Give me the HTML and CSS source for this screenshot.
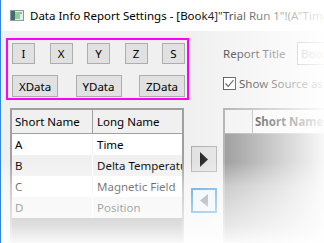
FILE: index.html
```html
<!DOCTYPE html>
<html>
<head>
<meta charset="utf-8">
<link rel="stylesheet" href="styles.css">
</head>
<body>
<div class="window">
  <div class="titlebar">
    <svg class="appicon" width="14" height="11" viewBox="0 0 14 11">
      <rect x="0.5" y="0.5" width="13" height="10" fill="#e6eded" stroke="#8c9a9a"/>
      <rect x="1" y="1" width="4" height="9" fill="#436b70"/>
      <rect x="5" y="2" width="5" height="7" fill="#8fcf95"/>
      <rect x="10" y="2" width="2" height="2" fill="#9bb0b0"/>
    </svg>
    <span class="title">Data Info Report Settings - [Book4]"Trial Run 1"!(A"Time")</span>
  </div>
  <div class="client">
    <div class="toprow">
      <div class="tokens">
        <div class="btnrow r1">
          <div class="btn">I</div>
          <div class="btn">X</div>
          <div class="btn">Y</div>
          <div class="btn">Z</div>
          <div class="btn">S</div>
        </div>
        <div class="btnrow r2">
          <div class="btn">XData</div>
          <div class="btn">YData</div>
          <div class="btn">ZData</div>
        </div>
      </div>
      <div class="form">
        <div class="field">
          <span class="label">Report Title</span>
          <div class="textbox">Book4</div>
        </div>
        <div class="check">
          <span class="box">
            <svg width="11" height="11" viewBox="0 0 11 11"><path d="M1.5 5.5 L4.2 8.3 L9.5 2.2" fill="none" stroke="#333" stroke-width="1.2"/></svg>
          </span>
          <span>Show Source as Title</span>
        </div>
      </div>
    </div>
    <div class="bottomrow">
      <div class="grid left">
        <div class="ghead">
          <div class="c1">Short Name</div>
          <div class="c2">Long Name</div>
        </div>
        <div class="grow">
          <div class="c1">A</div>
          <div class="c2">Time</div>
        </div>
        <div class="grow alt">
          <div class="c1">B</div>
          <div class="c2">Delta Temperature</div>
        </div>
        <div class="grow">
          <div class="c1">C</div>
          <div class="c2">Magnetic Field</div>
        </div>
        <div class="grow alt">
          <div class="c1">D</div>
          <div class="c2">Position</div>
        </div>
      </div>
      <div class="movers">
        <div class="mv">
          <svg width="8" height="15" viewBox="0 0 8 15"><polygon points="0,0 8,7.5 0,15" fill="#1a1a1a"/></svg>
        </div>
        <div class="mv focus">
          <svg width="8" height="13" viewBox="0 0 8 13"><polygon points="8,0 0,6.5 8,13" fill="#6e6e6e"/></svg>
        </div>
      </div>
      <div class="grid right">
        <div class="ghead">
          <div class="r0"></div>
          <div class="rh">Short Name</div>
        </div>
      </div>
    </div>
  </div>
  <div class="fade"></div>
</div>
</body>
</html>
```
FILE: styles.css
```css
* {
  box-sizing: border-box;
  margin: 0;
  padding: 0;
}

html, body {
  width: 324px;
  height: 243px;
  overflow: hidden;
  background: #fff;
}

body {
  font-family: "Noto Sans", "Open Sans", sans-serif;
  font-size: 11.5px;
  color: #000;
}

.window {
  position: relative;
  width: 324px;
  height: 243px;
  border-left: 1px solid #2f86dc;
  background: #f0f0f0;
  display: flex;
  flex-direction: column;
  overflow: hidden;
}

.titlebar {
  height: 31px;
  flex: none;
  background: #fff;
  display: flex;
  align-items: center;
  padding-left: 9px;
  gap: 6px;
  white-space: nowrap;
}

.appicon {
  flex: none;
}

.title {
  font-size: 11.5px;
  color: #000;
}

.client {
  flex: 1;
  padding-top: 7px;
  display: flex;
  flex-direction: column;
  gap: 8px;
  min-height: 0;
}

.toprow {
  display: flex;
  gap: 34px;
  padding-left: 5px;
  height: 62px;
  flex: none;
}

.tokens {
  width: 183px;
  height: 62px;
  flex: none;
  border: 2px solid #ff00ff;
  padding: 3px 2px 1px 4px;
  display: flex;
  flex-direction: column;
  justify-content: space-between;
}

.btnrow {
  display: flex;
  justify-content: space-between;
}

.btn {
  background: #e1e1e1;
  border: 1px solid #adadad;
  display: flex;
  align-items: center;
  justify-content: center;
  color: #000;
}

.r1 .btn {
  width: 23px;
  height: 21px;
}

.r2 .btn {
  width: 46px;
  height: 22px;
}

.form {
  display: flex;
  flex-direction: column;
  padding-top: 4px;
  gap: 12px;
  white-space: nowrap;
}

.field {
  display: flex;
  align-items: center;
}

.label {
  width: 74px;
  color: #222;
}

.textbox {
  width: 80px;
  height: 23px;
  border: 1px solid #7a7a7a;
  background: #fff;
  padding-left: 3px;
  display: flex;
  align-items: center;
  color: #6d6d6d;
}

.check {
  display: flex;
  align-items: center;
  gap: 3px;
  height: 13px;
}

.box {
  width: 13px;
  height: 13px;
  border: 1px solid #333;
  background: #fff;
  display: flex;
  align-items: center;
  justify-content: center;
}

.bottomrow {
  display: flex;
  padding-left: 9px;
  flex: 1;
  min-height: 0;
}

.grid {
  border: 2px solid #a0a0a0;
  border-bottom: none;
  background: #828282;
  display: flex;
  flex-direction: column;
  white-space: nowrap;
}

.grid.left {
  width: 174px;
  flex: none;
}

.grid.right {
  margin-left: 6px;
  width: 120px;
  flex: none;
}

.ghead {
  height: 24px;
  display: flex;
  background: #f0f0f0;
  border-bottom: 1px solid #a0a0a0;
  flex: none;
}

.ghead .c1 {
  width: 81px;
  border-right: 1px solid #a0a0a0;
  padding-left: 3px;
  display: flex;
  align-items: center;
}

.ghead .c2 {
  flex: 1;
  padding-left: 4px;
  display: flex;
  align-items: center;
  overflow: hidden;
}

.grow {
  height: 21px;
  display: flex;
  background: #fff;
  flex: none;
}

.grow.alt {
  background: #f0f0f0;
}

.grow .c1 {
  width: 81px;
  border-right: 1px solid #f3f3f3;
  padding-left: 3px;
  display: flex;
  align-items: center;
}

.grow.alt .c1 {
  border-right-color: #fff;
}

.grow .c2 {
  flex: 1;
  padding-left: 4px;
  display: flex;
  align-items: center;
  overflow: hidden;
}

.movers {
  margin-left: 7px;
  width: 26px;
  flex: none;
  padding-top: 38px;
  display: flex;
  flex-direction: column;
  gap: 16px;
}

.mv {
  width: 26px;
  height: 26px;
  background: #e1e1e1;
  border: 1px solid #adadad;
  display: flex;
  align-items: center;
  justify-content: center;
}

.mv.focus {
  height: 25px;
  border: 2px solid #0078d7;
  background: #e5f1fb;
}

.r0 {
  width: 28px;
  border-right: 1px solid #a0a0a0;
}

.rh {
  flex: 1;
  padding-left: 2px;
  font-weight: bold;
  display: flex;
  align-items: center;
  background: #f6f6f6;
}

.fade {
  position: absolute;
  inset: 0;
  pointer-events: none;
  background:
    linear-gradient(to right, rgba(255,255,255,0) 190px, rgba(255,255,255,0.85) 310px, #fff 330px),
    linear-gradient(to bottom, rgba(255,255,255,0) 162px, rgba(255,255,255,0.45) 186px, rgba(255,255,255,0.62) 207px, rgba(255,255,255,0.74) 225px, rgba(255,255,255,0.95) 243px);
}
```
